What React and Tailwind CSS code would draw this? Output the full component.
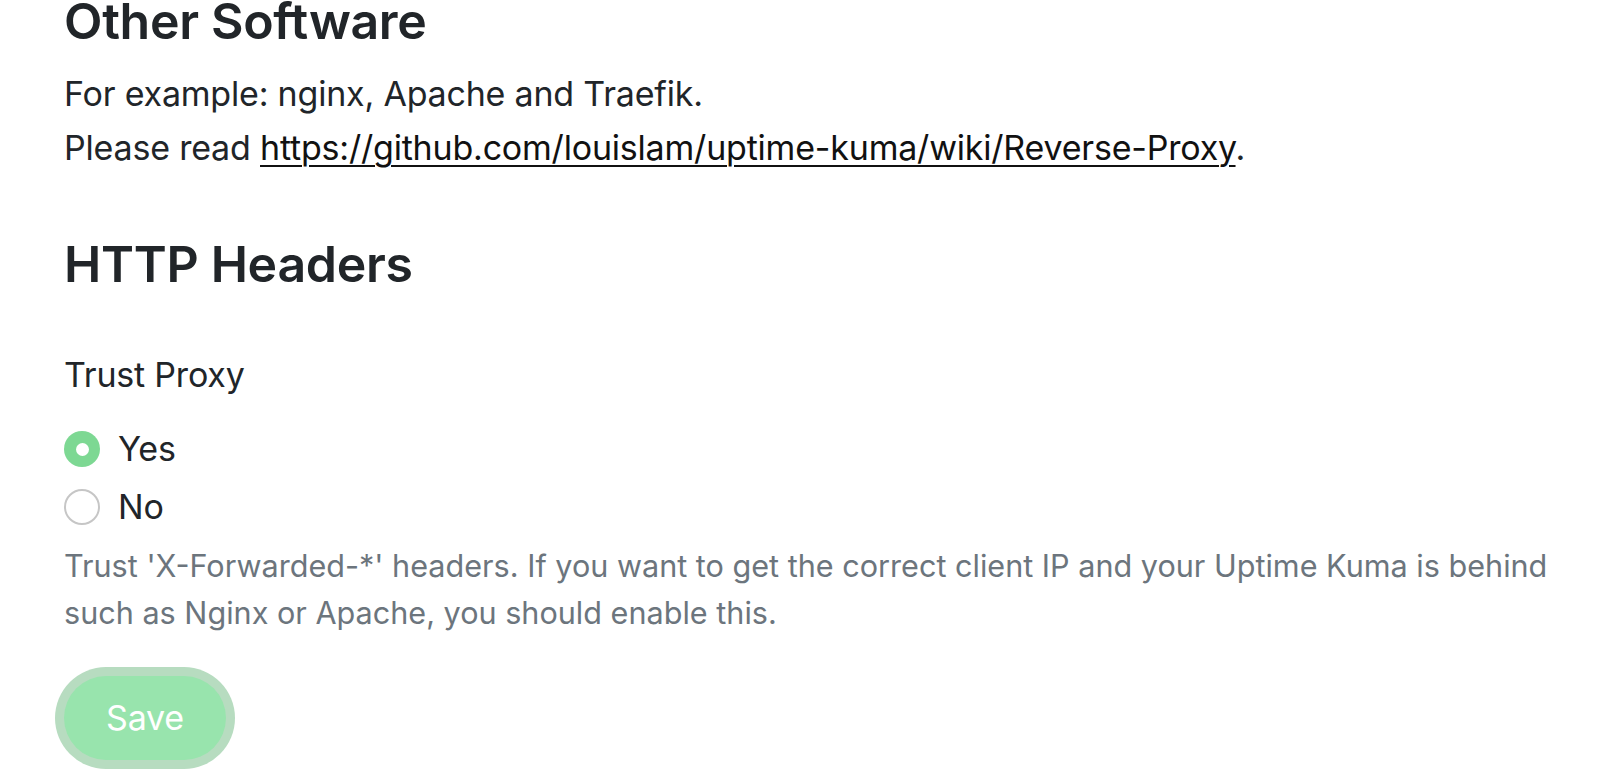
import { useState } from "react";

function Radio({ checked, label, onSelect }) {
  return (
    <label className="flex cursor-pointer items-start gap-[18px] h-[54px] leading-[54px]">
      <span
        className={
          checked
            ? "mt-[9px] flex h-[36px] w-[36px] shrink-0 items-center justify-center rounded-full bg-[#7dd893]"
            : "mt-[9px] flex h-[36px] w-[36px] shrink-0 items-center justify-center rounded-full border-2 border-[#c6c6c6] bg-white"
        }
        onClick={onSelect}
      >
        {checked && <span className="h-[13px] w-[13px] rounded-full bg-white" />}
      </span>
      <span className="text-[34px] tracking-[-0.2px] text-[#212529]">{label}</span>
    </label>
  );
}

export default function App() {
  const [trustProxy, setTrustProxy] = useState("yes");

  return (
    <div
      className="min-h-screen bg-white text-[#212529]"
      style={{ fontFamily: "Inter, 'Noto Sans', sans-serif" }}
    >
      <div className="-mt-[6px] pl-[64px] pr-[40px]">

        {/* ================= OTHER SOFTWARE ================= */}

        <h5 className="text-[50px] font-semibold leading-[54px] tracking-[-0.3px]">
          Other Software
        </h5>

        <div className="mt-[19px] text-[34px] leading-[54px] tracking-[-0.2px]">
          For example: nginx, Apache and Traefik.
          <br />
          Please read{" "}
          <a
            href="https://github.com/louislam/uptime-kuma/wiki/Reverse-Proxy"
            className="text-[#111] underline underline-offset-[5px] decoration-[2px]"
          >
            https://github.com/louislam/uptime-kuma/wiki/Reverse-Proxy
          </a>
          .
        </div>

        {/* ================= HTTP HEADERS ================= */}

        <h5 className="mt-[62px] text-[50px] font-semibold leading-[54px] tracking-[-0.3px]">
          HTTP Headers
        </h5>

        <div className="mt-[57px] text-[34px] leading-[54px] tracking-[-0.2px]">
          Trust Proxy
        </div>

        <div className="mt-[20px] flex flex-col gap-[4px]">
          <Radio
            label="Yes"
            checked={trustProxy === "yes"}
            onSelect={() => setTrustProxy("yes")}
          />
          <Radio
            label="No"
            checked={trustProxy === "no"}
            onSelect={() => setTrustProxy("no")}
          />
        </div>

        <div className="mt-[8px] text-[30.6px] leading-[47.25px] text-[#6c757d]">
          <span className="block whitespace-nowrap">
            Trust 'X-Forwarded-*' headers. If you want to get the correct client IP and your Uptime Kuma is behind
          </span>
          <span className="block whitespace-nowrap">
            such as Nginx or Apache, you should enable this.
          </span>
        </div>

        <div className="mt-[39px]">
          <button
            type="submit"
            className="h-[84px] w-[162px] rounded-full bg-[#98e4ad] text-[34px] tracking-[-0.2px] text-white shadow-[0_0_0_9px_#b7dcc0]"
          >
            Save
          </button>
        </div>
      </div>
    </div>
  );
}
